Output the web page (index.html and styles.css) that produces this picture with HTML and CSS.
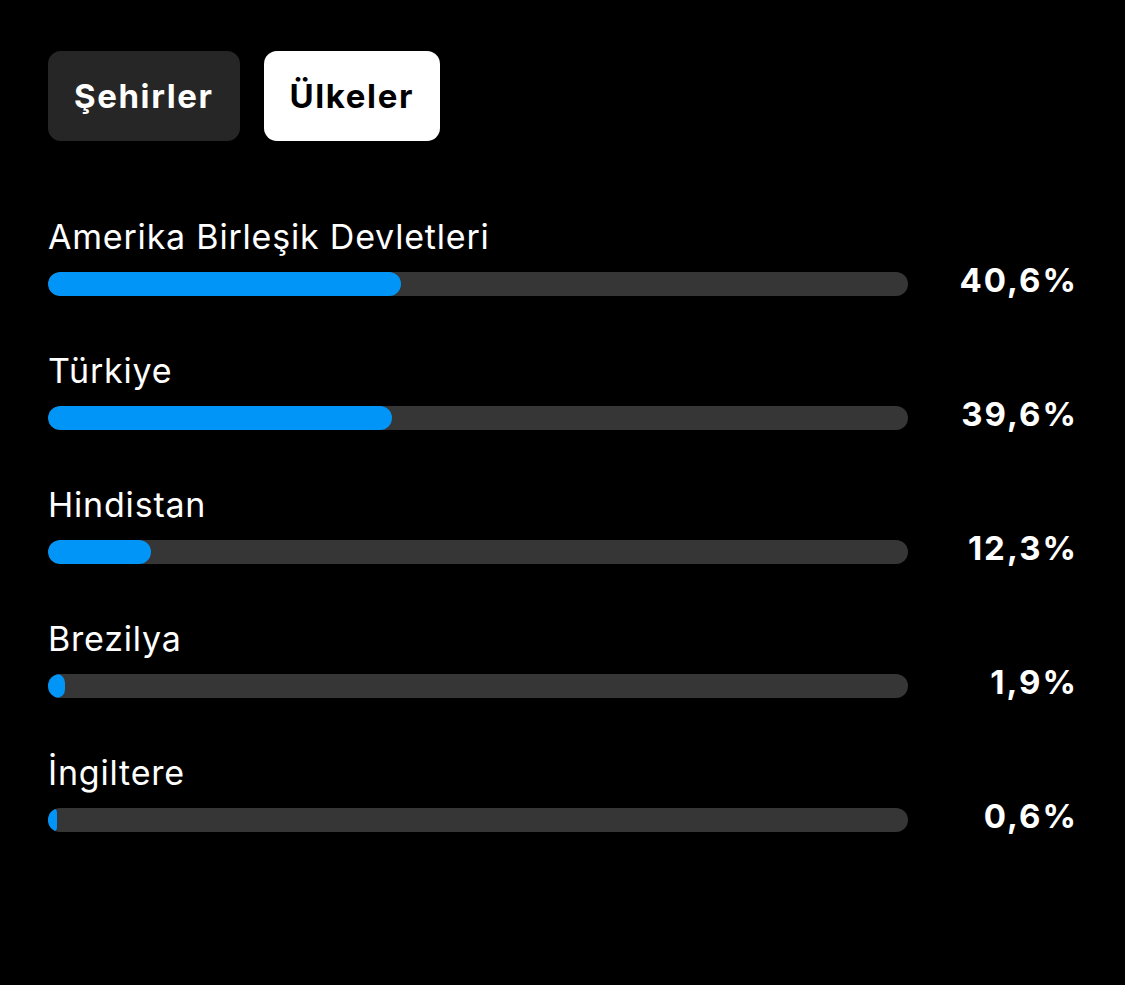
FILE: index.html
```html
<!DOCTYPE html>
<html lang="tr">
<head>
<meta charset="utf-8">
<title>Ülkeler</title>
<link rel="stylesheet" href="styles.css">
</head>
<body>
<main class="page">
  <div class="tabs">
    <button class="tab">Şehirler</button>
    <button class="tab tab-active">Ülkeler</button>
  </div>
  <ul class="list">
    <li class="row">
      <div class="label">Amerika Birleşik Devletleri</div>
      <div class="line">
        <div class="track"><div class="fill" style="width:41%"></div></div>
        <div class="pct">40,6%</div>
      </div>
    </li>
    <li class="row">
      <div class="label">Türkiye</div>
      <div class="line">
        <div class="track"><div class="fill" style="width:40%"></div></div>
        <div class="pct">39,6%</div>
      </div>
    </li>
    <li class="row">
      <div class="label">Hindistan</div>
      <div class="line">
        <div class="track"><div class="fill" style="width:12%"></div></div>
        <div class="pct">12,3%</div>
      </div>
    </li>
    <li class="row">
      <div class="label">Brezilya</div>
      <div class="line">
        <div class="track"><div class="fill" style="width:2%"></div></div>
        <div class="pct">1,9%</div>
      </div>
    </li>
    <li class="row">
      <div class="label">İngiltere</div>
      <div class="line">
        <div class="track"><div class="fill" style="width:1%"></div></div>
        <div class="pct">0,6%</div>
      </div>
    </li>
  </ul>
</main>
</body>
</html>
```

FILE: styles.css
```css
* { box-sizing: border-box; }
html, body {
  margin: 0;
  padding: 0;
  background: #000;
  color: #fff;
  font-family: Inter, "Noto Sans", "DejaVu Sans", sans-serif;
}
.page {
  width: 1125px;
  height: 985px;
  padding: 51px 50px 0 48px;
  overflow: hidden;
}
.tabs {
  display: flex;
  gap: 24px;
}
.tab {
  height: 90px;
  padding: 0 26px;
  border: none;
  border-radius: 13px;
  background: #262626;
  color: #fff;
  font-family: inherit;
  font-size: 33px;
  font-weight: 700;
  letter-spacing: 1.6px;
  display: flex;
  align-items: center;
  justify-content: center;
  cursor: pointer;
}
.tab-active {
  background: #fff;
  color: #000;
}
.list {
  list-style: none;
  margin: 76px 0 0 0;
  padding: 0;
  display: flex;
  flex-direction: column;
  gap: 55px;
}
.row {
  display: flex;
  flex-direction: column;
  gap: 15px;
}
.label {
  font-size: 34px;
  font-weight: 400;
  line-height: 40px;
  letter-spacing: 0.8px;
  white-space: nowrap;
}
.line {
  display: grid;
  grid-template-columns: 1fr 167px;
  align-items: start;
}
.track {
  height: 24px;
  border-radius: 12px;
  background: #363636;
  overflow: hidden;
}
.fill {
  height: 100%;
  min-width: 9px;
  border-radius: 12px;
  background: #0095f6;
}
.pct {
  text-align: right;
  font-size: 33px;
  font-weight: 700;
  line-height: 16px;
  letter-spacing: 2px;
  margin-right: -3px;
  white-space: nowrap;
}
```
